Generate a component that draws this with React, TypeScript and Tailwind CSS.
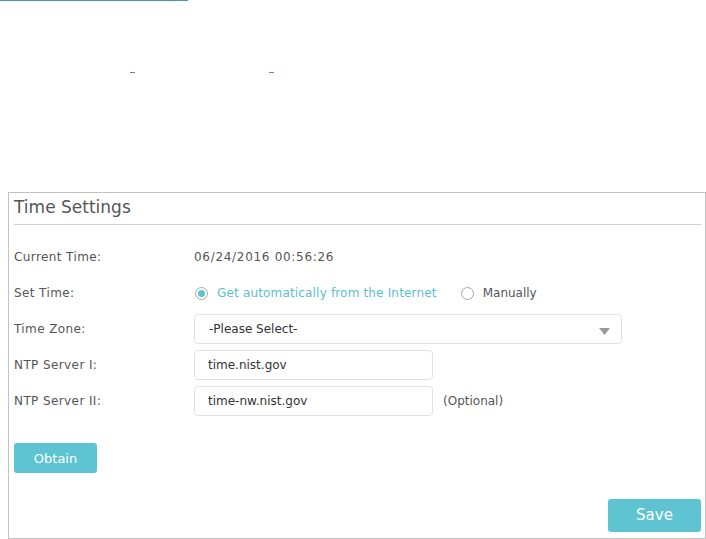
import React from "react";

function Radio({ checked }: { checked?: boolean }) {
  return (
    <span className="flex h-[13px] w-[13px] items-center justify-center rounded-full border border-[#a8a8a8] bg-white">
      {checked && <span className="h-[7px] w-[7px] rounded-full bg-[#5bc3d0]" />}
    </span>
  );
}

function Row({ label, children }: { label: string; children: React.ReactNode }) {
  return (
    <div className="flex h-[30px] items-center">
      <div className="w-[180px] shrink-0 tracking-[0.4px] text-[#555555]">{label}</div>
      <div className="flex items-center">{children}</div>
    </div>
  );
}

export default function App() {
  return (
    <div className="bg-white text-[12px] leading-none" style={{ fontFamily: '"DejaVu Sans", Verdana, sans-serif' }}>
      <div className="h-px w-[188px] bg-[#4a94a7]" />
      <div className="mt-[71px] flex h-px">
        <span className="ml-[130px] h-px w-[5px] bg-[#4a94a7]" />
        <span className="ml-[134px] h-px w-[5px] bg-[#4a94a7]" />
      </div>
      <div className="ml-[8px] mt-[119px] flex h-[347px] w-[698px] flex-col border border-[#c2c2c2]">
        <div className="h-[31px] pl-[5px] pt-[4px] text-[17px] leading-[20px] text-[#555555]">Time Settings</div>
        <div className="ml-[5px] mr-[4px] h-px bg-[#cfcfcf]" />
        <div className="mt-[17px] flex flex-col gap-[6px] pl-[5px]">
          <Row label="Current Time:">
            <span className="tracking-[0.7px] text-[#555555]">06/24/2016 00:56:26</span>
          </Row>
          <Row label="Set Time:">
            <span className="ml-[1px] flex items-center">
              <Radio checked />
              <span className="ml-[9px] tracking-[0.17px] text-[#5bc0cf]">Get automatically from the Internet</span>
            </span>
            <span className="ml-[24px] flex items-center">
              <Radio />
              <span className="ml-[9px] text-[#555555]">Manually</span>
            </span>
          </Row>
          <Row label="Time Zone:">
            <div className="relative flex h-[30px] w-[428px] items-center rounded-[4px] border border-[#e2e2e2] pl-[14px] text-[#333333]">
              -Please Select-
              <svg className="absolute right-[11px] top-[13px]" width="11" height="7" viewBox="0 0 11 7">
                <path d="M0 0 L11 0 L5.5 7 Z" fill="#9a9a9a" />
              </svg>
            </div>
          </Row>
          <Row label="NTP Server I:">
            <div className="flex h-[30px] w-[239px] items-center rounded-[4px] border border-[#e2e2e2] pl-[13px] text-[#333333]">
              time.nist.gov
            </div>
          </Row>
          <Row label="NTP Server II:">
            <div className="flex h-[30px] w-[239px] items-center rounded-[4px] border border-[#e2e2e2] pl-[13px] text-[#333333]">
              time-nw.nist.gov
            </div>
            <span className="ml-[10px] text-[#555555]">(Optional)</span>
          </Row>
        </div>
        <div className="mt-[27px] pl-[5px]">
          <button className="flex h-[30px] w-[83px] items-center justify-center rounded-[3px] bg-[#5ec4d1] text-[13px] text-white">
            Obtain
          </button>
        </div>
        <div className="mr-[4px] mt-[26px] flex justify-end">
          <button className="flex h-[33px] w-[93px] items-center justify-center rounded-[3px] bg-[#5ec4d1] text-[15px] text-white">
            Save
          </button>
        </div>
      </div>
    </div>
  );
}
